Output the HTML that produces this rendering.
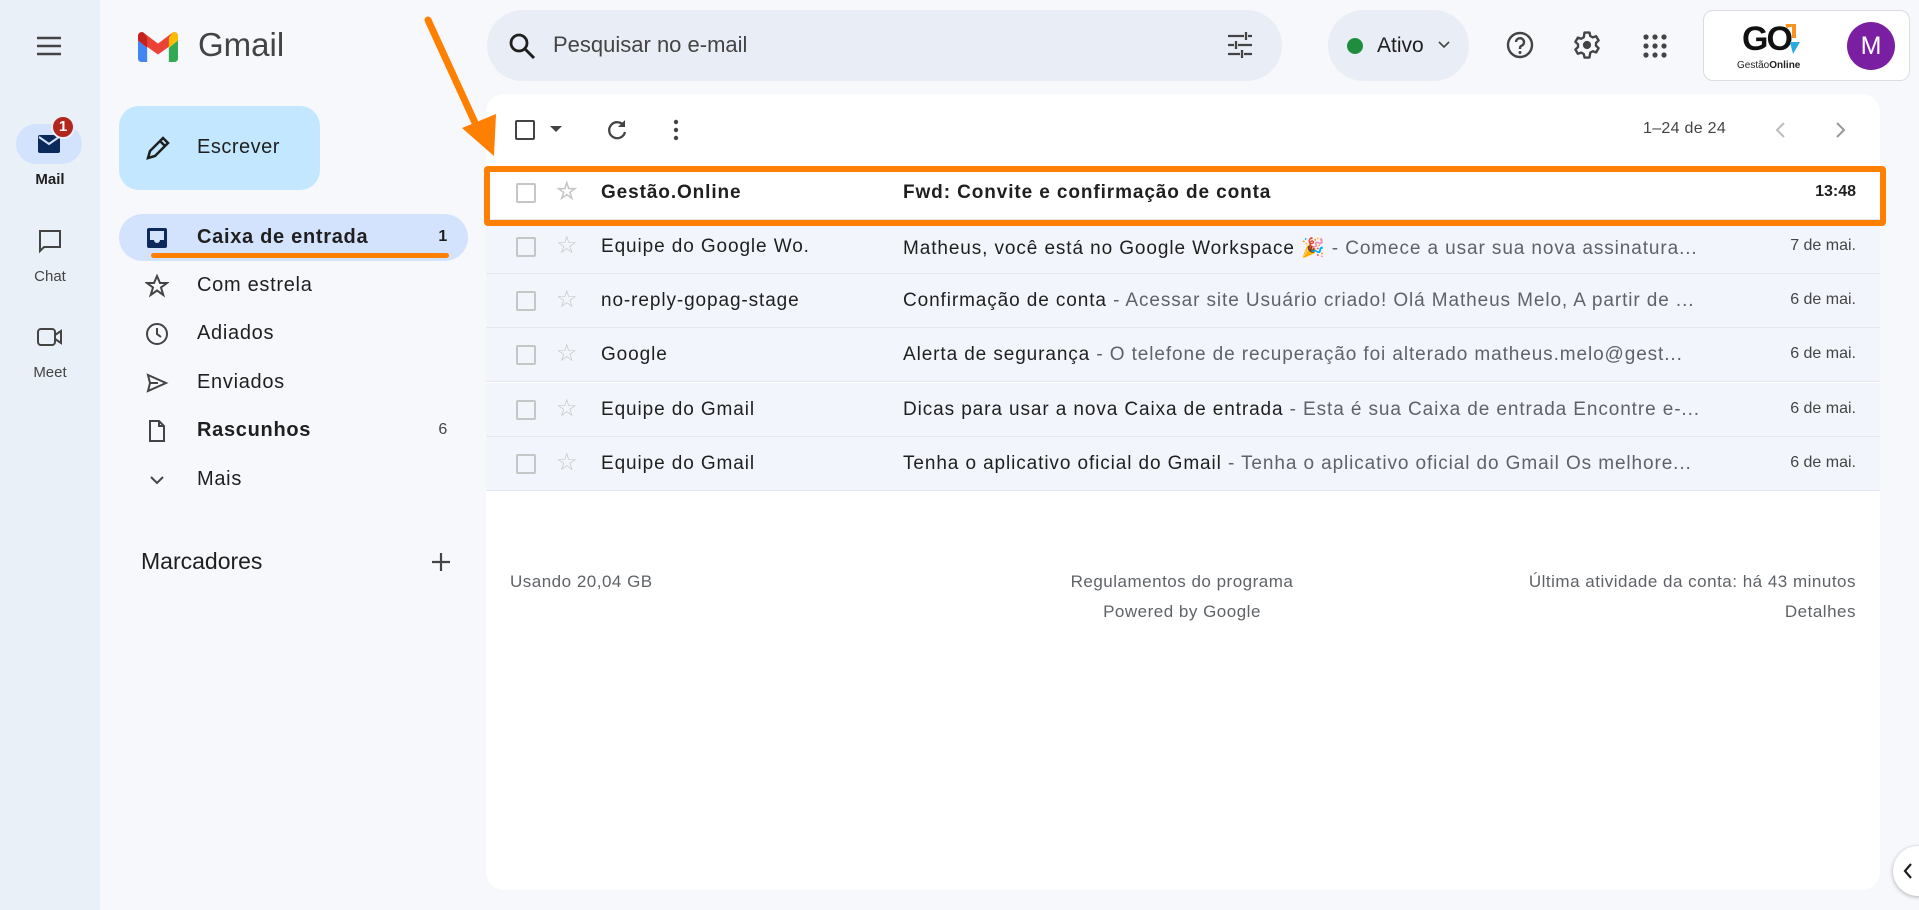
<!DOCTYPE html>
<html><head><meta charset="utf-8"><style>
*{margin:0;padding:0;box-sizing:border-box}
body{width:1919px;height:910px;background:#f6f8fc;font-family:"Liberation Sans",sans-serif;color:#1f1f1f;position:relative;overflow:hidden}
.a{position:absolute}
.rail{left:0;top:0;width:100px;height:910px;background:#eaf0f8}
.lbl{font-size:15px;color:#444;width:100px;text-align:center;left:0}
.nav{left:119px;width:349px;height:47px;border-radius:24px;font-size:20px;color:#1f1f1f;letter-spacing:.7px}
.nav .t{position:absolute;left:78px;top:12px}
.nav .c{position:absolute;right:20px;top:14px;font-size:16px}
.nav svg{position:absolute;left:26px;top:12px}
.card{left:486px;top:94px;width:1394px;height:796px;background:#fff;border-radius:18px}
.row{left:486px;width:1394px;height:54px;background:#f2f6fc;border-bottom:1px solid #e5e9ef;font-size:19px;color:#1f1f1f;letter-spacing:.9px}
.row .cb{position:absolute;left:30px;top:17px;width:20px;height:20px;border:2px solid #c4c7c5;border-radius:2px}
.row .st{position:absolute;left:70px;top:14px;font-size:24px;color:#c4c7c5;line-height:24px}
.row .s{position:absolute;left:115px;top:16px}
.row .sub{position:absolute;left:417px;top:16px;white-space:nowrap;width:800px;overflow:hidden}
.row .sub span{color:#5f6368}
.row .d{position:absolute;right:24px;top:17px;font-size:16px;color:#444;letter-spacing:0}
.ic{fill:none;stroke:#444;stroke-width:2}
.ft{font-size:17px;color:#5f6368;letter-spacing:.5px}
</style></head><body>
<div class="a rail"></div>
<svg class="a" style="left:35px;top:34px" width="28" height="24"><path d="M2 4h24M2 12h24M2 20h24" stroke="#444" stroke-width="2.5"/></svg>
<div class="a" style="left:16px;top:124px;width:66px;height:40px;border-radius:20px;background:#d3e3fd"></div>
<svg class="a" style="left:37px;top:134px" width="24" height="20"><rect x="1" y="1" width="22" height="18" rx="2" fill="#0b2a5b"/><path d="M2 3l10 7 10-7" stroke="#d3e3fd" stroke-width="2" fill="none"/></svg>
<div class="a" style="left:51px;top:115px;width:24px;height:24px;border-radius:12px;background:#b3261e;color:#fff;font-size:15px;font-weight:bold;text-align:center;line-height:20px;border:2px solid #eaf0f8">1</div>
<div class="a lbl" style="top:171px;color:#1f1f1f;font-weight:bold">Mail</div>
<svg class="a" style="left:37px;top:228px" width="26" height="26"><path class="ic" d="M3 3h20v16H7l-4 4z"/></svg>
<div class="a lbl" style="top:268px">Chat</div>
<svg class="a" style="left:36px;top:326px" width="28" height="22"><rect class="ic" x="2" y="3" width="17" height="16" rx="3"/><path class="ic" d="M19 9l6-4v12l-6-4"/></svg>
<div class="a lbl" style="top:364px">Meet</div>

<svg class="a" style="left:134px;top:32px" width="48" height="30" viewBox="0 0 48 36"><path d="M0 10v22a4 4 0 0 0 4 4h7V19z" fill="#4285f4"/><path d="M37 19v17h7a4 4 0 0 0 4-4V10z" fill="#34a853"/><path d="M0 10l24 17 24-17V5c0-4-4-6-7-4L24 14 7 1C4-1 0 1 0 5z" fill="#ea4335"/><path d="M37 7v12l11-9V5c0-4-4-6-7-4z" fill="#fbbc04"/><path d="M0 5v5l11 9V7L7 1C4-1 0 1 0 5z" fill="#c5221f"/></svg>
<div class="a" style="left:198px;top:26px;font-size:33px;color:#444">Gmail</div>

<div class="a" style="left:119px;top:106px;width:201px;height:84px;border-radius:20px;background:#c2e7ff"></div>
<svg class="a" style="left:144px;top:134px" width="28" height="28"><path d="M4 24l2-7L19 4l5 5L11 22z M16 7l5 5" fill="none" stroke="#1f1f1f" stroke-width="2.5"/></svg>
<div class="a" style="left:197px;top:136px;font-size:20px;letter-spacing:.5px">Escrever</div>

<div class="a nav" style="top:214px;background:#d3e3fd;font-weight:bold"><svg width="24" height="24"><rect x="2" y="2" width="20" height="20" rx="2" fill="#0b2a5b"/><path d="M5 5h14v9h-4a3 3 0 0 1-6 0H5z" fill="#d3e3fd"/></svg><span class="t">Caixa de entrada</span><span class="c" style="font-weight:bold">1</span></div>
<div class="a" style="left:151px;top:253px;width:298px;height:5px;border-radius:3px;background:#ff7f00"></div>
<div class="a nav" style="top:262px"><svg width="24" height="24"><path class="ic" d="M12 2l3 7h7l-6 4.5 2.3 7.5L12 16.5 5.7 21 8 13.5 2 9h7z"/></svg><span class="t">Com estrela</span></div>
<div class="a nav" style="top:310px"><svg width="24" height="24"><circle class="ic" cx="12" cy="12" r="10"/><path class="ic" d="M12 6v6l4 3"/></svg><span class="t">Adiados</span></div>
<div class="a nav" style="top:359px"><svg width="24" height="24"><path class="ic" d="M3 4l18 8-18 8 2-8zM5 12h8"/></svg><span class="t">Enviados</span></div>
<div class="a nav" style="top:407px;font-weight:bold"><svg width="24" height="24"><path class="ic" d="M5 2h9l5 5v15H5zM14 2v5h5"/></svg><span class="t">Rascunhos</span><span class="c" style="font-weight:normal;color:#444">6</span></div>
<div class="a nav" style="top:456px"><svg width="24" height="24"><path class="ic" d="M6 9l6 6 6-6"/></svg><span class="t">Mais</span></div>
<div class="a" style="left:141px;top:548px;font-size:23px">Marcadores</div>
<svg class="a" style="left:430px;top:551px" width="22" height="22"><path d="M11 2v18M2 11h18" stroke="#444" stroke-width="2.2"/></svg>

<div class="a" style="left:487px;top:10px;width:795px;height:71px;border-radius:36px;background:#e9eef6"></div>
<svg class="a" style="left:507px;top:31px" width="30" height="30"><circle cx="12" cy="12" r="8" fill="none" stroke="#1f1f1f" stroke-width="2.8"/><path d="M18 18l9 9" stroke="#1f1f1f" stroke-width="3"/></svg>
<div class="a" style="left:553px;top:32px;font-size:22px;color:#444">Pesquisar no e-mail</div>
<svg class="a" style="left:1226px;top:31px" width="28" height="28"><path d="M2 5h16M22 5h4M2 14h6M12 14h14M2 23h12M18 23h8M20 1v8M10 10v8M16 19v8" stroke="#444" stroke-width="2.3"/></svg>

<div class="a" style="left:1328px;top:10px;width:141px;height:71px;border-radius:36px;background:#e9eef6"></div>
<div class="a" style="left:1347px;top:38px;width:16px;height:16px;border-radius:8px;background:#1e8e3e"></div>
<div class="a" style="left:1377px;top:34px;font-size:21px">Ativo</div>
<svg class="a" style="left:1437px;top:40px" width="14" height="10"><path d="M2 2l5 5 5-5" fill="none" stroke="#444" stroke-width="1.6"/></svg>
<svg class="a" style="left:1505px;top:30px" width="30" height="30"><circle cx="15" cy="15" r="12" fill="none" stroke="#444" stroke-width="2.4"/><path d="M11 12a4 4 0 1 1 5 4c-1 .5-1 1.5-1 3" fill="none" stroke="#444" stroke-width="2.4"/><circle cx="15" cy="22.5" r="1.5" fill="#444"/></svg>
<svg class="a" style="left:1572px;top:30px" width="30" height="30" viewBox="0 0 24 24"><path d="M10 2h4l.6 2.8 2 1.1 2.7-.9 2 3.4-2.1 1.9v2.3l2.1 1.9-2 3.4-2.7-.9-2 1.1L14 22h-4l-.6-2.8-2-1.1-2.7.9-2-3.4 2.1-1.9v-2.3L2.7 9.5l2-3.4 2.7.9 2-1.1z" fill="none" stroke="#444" stroke-width="1.9" stroke-linejoin="round"/><circle cx="12" cy="12" r="3.3" fill="#444"/></svg>
<svg class="a" style="left:1642px;top:33px" width="26" height="26"><g fill="#444"><circle cx="4" cy="4" r="2.6"/><circle cx="13" cy="4" r="2.6"/><circle cx="22" cy="4" r="2.6"/><circle cx="4" cy="13" r="2.6"/><circle cx="13" cy="13" r="2.6"/><circle cx="22" cy="13" r="2.6"/><circle cx="4" cy="22" r="2.6"/><circle cx="13" cy="22" r="2.6"/><circle cx="22" cy="22" r="2.6"/></g></svg>

<div class="a" style="left:1703px;top:10px;width:207px;height:71px;border-radius:10px;background:#fff;border:1px solid #dadce0"></div>
<div class="a" style="left:1742px;top:22px;font-size:34px;font-weight:bold;color:#111;letter-spacing:-2px;line-height:34px">GO</div>
<svg class="a" style="left:1780px;top:24px" width="22" height="34"><path d="M6 2l8-2v14" stroke="#f7931e" stroke-width="4" fill="none"/><path d="M10 18l10 0-7 12z" fill="#29abe2"/></svg>
<div class="a" style="left:1737px;top:60px;font-size:10px;color:#222">Gestão<b>Online</b></div>
<div class="a" style="left:1847px;top:22px;width:48px;height:48px;border-radius:24px;background:#7b1fa2;color:#fff;font-size:25px;text-align:center;line-height:48px">M</div>

<div class="a card"></div>
<div class="a" style="left:515px;top:120px;width:20px;height:20px;border:2px solid #444;border-radius:2px"></div>
<svg class="a" style="left:549px;top:124px" width="14" height="10"><path d="M1 2h12L7 8z" fill="#444"/></svg>
<svg class="a" style="left:605px;top:118px" width="24" height="24"><path d="M19 8a8 8 0 1 0 1 6" fill="none" stroke="#444" stroke-width="2.3"/><path d="M20 2v7h-7z" fill="#444"/></svg>
<svg class="a" style="left:670px;top:118px" width="12" height="24"><g fill="#444"><circle cx="6" cy="4" r="2.2"/><circle cx="6" cy="12" r="2.2"/><circle cx="6" cy="20" r="2.2"/></g></svg>
<div class="a" style="left:1643px;top:120px;font-size:16px;color:#444;letter-spacing:.3px">1–24 de 24</div>
<svg class="a" style="left:1773px;top:120px" width="16" height="20"><path d="M11 3L4 10l7 7" fill="none" stroke="#bbb" stroke-width="2"/></svg>
<svg class="a" style="left:1832px;top:120px" width="16" height="20"><path d="M5 3l7 7-7 7" fill="none" stroke="#999" stroke-width="2"/></svg>

<div class="a row" style="top:166px;background:#fff;font-weight:bold"><div class="cb"></div><div class="st">☆</div><div class="s">Gestão.Online</div><div class="sub">Fwd: Convite e confirmação de conta</div><div class="d" style="color:#1f1f1f;font-weight:bold">13:48</div></div>
<div class="a row" style="top:220px"><div class="cb"></div><div class="st">☆</div><div class="s">Equipe do Google Wo.</div><div class="sub">Matheus, você está no Google Workspace 🎉 <span>- Comece a usar sua nova assinatura...</span></div><div class="d">7 de mai.</div></div>
<div class="a row" style="top:274px"><div class="cb"></div><div class="st">☆</div><div class="s">no-reply-gopag-stage</div><div class="sub">Confirmação de conta <span>- Acessar site Usuário criado! Olá Matheus Melo, A partir de ...</span></div><div class="d">6 de mai.</div></div>
<div class="a row" style="top:328px"><div class="cb"></div><div class="st">☆</div><div class="s">Google</div><div class="sub">Alerta de segurança <span>- O telefone de recuperação foi alterado matheus.melo@gest...</span></div><div class="d">6 de mai.</div></div>
<div class="a row" style="top:383px"><div class="cb"></div><div class="st">☆</div><div class="s">Equipe do Gmail</div><div class="sub">Dicas para usar a nova Caixa de entrada <span>- Esta é sua Caixa de entrada Encontre e-...</span></div><div class="d">6 de mai.</div></div>
<div class="a row" style="top:437px"><div class="cb"></div><div class="st">☆</div><div class="s">Equipe do Gmail</div><div class="sub">Tenha o aplicativo oficial do Gmail <span>- Tenha o aplicativo oficial do Gmail Os melhore...</span></div><div class="d">6 de mai.</div></div>

<div class="a" style="left:484px;top:166px;width:1402px;height:60px;border:6px solid #ff7f00;border-radius:4px"></div>

<div class="a ft" style="left:510px;top:572px">Usando 20,04 GB</div>
<div class="a ft" style="left:1032px;top:572px;width:300px;text-align:center">Regulamentos do programa</div>
<div class="a ft" style="left:1032px;top:602px;width:300px;text-align:center">Powered by Google</div>
<div class="a ft" style="right:63px;top:572px;text-align:right">Última atividade da conta: há 43 minutos</div>
<div class="a ft" style="right:63px;top:602px;text-align:right">Detalhes</div>

<svg class="a" style="left:410px;top:10px" width="100" height="160"><path d="M18 10L72 128" stroke="#ff7f00" stroke-width="7" stroke-linecap="round"/><path d="M52 118L84 146 86 104z" fill="#ff7f00"/></svg>

<div class="a" style="left:1893px;top:846px;width:50px;height:50px;border-radius:25px;background:#fff;box-shadow:0 1px 4px rgba(0,0,0,.3)"></div>
<svg class="a" style="left:1902px;top:862px" width="12" height="18"><path d="M9 2L3 9l6 7" fill="none" stroke="#1f1f1f" stroke-width="2.2"/></svg>
</body></html>
